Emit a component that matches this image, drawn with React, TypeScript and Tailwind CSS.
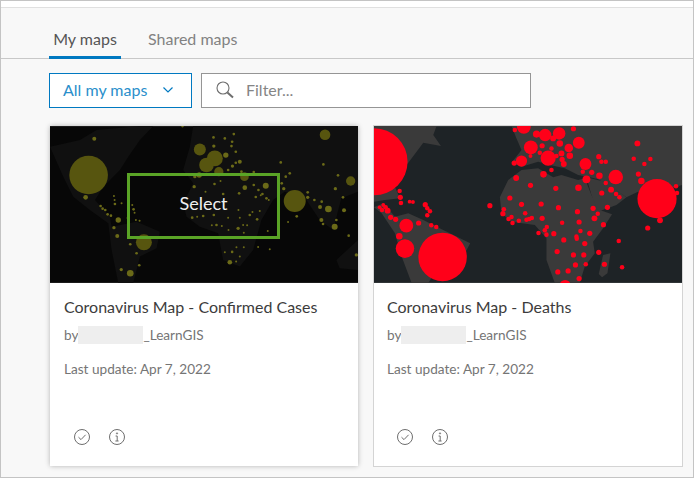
const font = "font-['Lato','Noto_Sans',sans-serif]";

// dots are [x, y, r] in 3x crop coordinates, same as the viewBox
const yellowDots = [
  [146, 165, 58], [312, 367, 24], [765, 243, 33], [480, 88, 18], [525, 115, 24], [500, 135, 22], [537, 155, 14], [856, 44, 16], [933, 183, 14], [614, 170, 13],
  [866, 267, 10], [885, 320, 9], [678, 197, 9], [235, 300, 8], [271, 460, 10], [137, 232, 7], [163, 56, 6], [570, 427, 7], [558, 105, 8], [950, 405, 5],
  [521, 52, 4], [555, 55, 4], [582, 42, 4], [577, 65, 4], [575, 78, 4], [588, 95, 4], [522, 78, 5], [600, 125, 6], [578, 138, 5], [588, 128, 4], [565, 150, 4], [605, 155, 4], [642, 156, 4],
  [723, 127, 4], [851, 133, 4], [750, 160, 4], [738, 170, 4], [726, 190, 4], [732, 206, 5], [895, 166, 4], [887, 206, 5], [910, 232, 4], [804, 217, 4], [804, 232, 5], [824, 240, 4], [846, 245, 4], [841, 261, 6], [913, 271, 6], [890, 300, 4], [845, 300, 6], [850, 312, 4], [927, 347, 4], [771, 289, 4], [745, 306, 3],
  [222, 228, 3], [224, 240, 3], [225, 252, 4], [245, 250, 3], [182, 258, 4], [188, 266, 4], [196, 270, 4], [203, 283, 4], [213, 287, 4], [277, 255, 3], [281, 268, 4], [284, 278, 3], [263, 294, 3], [288, 300, 3], [299, 302, 3], [222, 323, 5], [232, 348, 6], [271, 373, 4], [290, 400, 4], [298, 436, 4], [244, 449, 5],
  [465, 170, 5], [478, 165, 8], [463, 200, 5], [497, 215, 3], [524, 192, 4], [542, 183, 3], [550, 222, 4], [598, 220, 4], [615, 203, 7], [642, 195, 4], [656, 210, 4], [668, 222, 4], [680, 235, 4], [648, 231, 4], [663, 226, 3], [687, 240, 3],
  [457, 293, 4], [472, 290, 3], [490, 288, 4], [522, 285, 4], [565, 293, 3], [600, 293, 3], [630, 285, 4], [596, 270, 3], [638, 276, 3], [652, 298, 4], [660, 273, 3], [530, 315, 4], [516, 316, 3], [546, 318, 3], [566, 330, 3], [595, 325, 5], [610, 315, 3], [622, 316, 3], [612, 338, 3], [632, 352, 3], [684, 333, 3], [555, 397, 3], [577, 396, 4], [590, 382, 3], [612, 382, 3], [655, 381, 3], [690, 388, 3], [600, 410, 3], [589, 425, 3], [428, 18, 4],
];

const redDots = [
  [27, 125, 100], [233, 411, 72], [877, 236, 58], [120, 386, 27], [124, 317, 20], [498, 82, 20], [550, 114, 22], [470, 123, 16], [541, 45, 18], [583, 40, 18], [642, 68, 17], [662, 132, 17], [753, 171, 21], [477, 20, 20], [612, 84, 12], [515, 42, 10],
  [103, 349, 9], [161, 309, 7], [199, 316, 6], [214, 321, 6], [104, 213, 6], [106, 232, 7], [108, 249, 6], [134, 245, 5], [144, 246, 5], [181, 254, 7], [187, 265, 6], [195, 274, 6], [187, 286, 6], [92, 298, 7], [77, 292, 7], [68, 272, 8], [51, 270, 6], [44, 262, 5], [55, 255, 5], [62, 262, 6],
  [626, 26, 7], [818, 70, 8], [807, 116, 6], [857, 117, 6], [839, 132, 6], [821, 162, 7], [830, 183, 9], [934, 199, 6], [937, 219, 6], [886, 301, 8], [849, 324, 7], [762, 363, 6], [772, 442, 6], [719, 433, 7], [702, 397, 7], [375, 257, 7],
  [702, 110, 7], [710, 125, 6], [723, 125, 6], [654, 155, 6], [681, 157, 7], [665, 178, 11], [704, 167, 9], [723, 189, 6], [739, 209, 8], [711, 219, 7], [754, 222, 6], [764, 232, 6], [728, 262, 7], [685, 265, 7], [699, 281, 6], [689, 295, 8], [716, 314, 7],
  [448, 129, 7], [536, 163, 9], [560, 150, 6], [454, 174, 8], [497, 196, 7], [573, 205, 7], [641, 203, 9], [435, 234, 7], [470, 253, 7], [529, 252, 7], [581, 263, 7], [638, 275, 7], [417, 268, 6], [414, 281, 7], [440, 291, 6], [431, 297, 6], [443, 309, 6], [462, 302, 6], [481, 280, 6], [485, 299, 6], [493, 297, 6], [501, 294, 6], [532, 295, 7], [592, 308, 6], [643, 306, 7],
  [546, 321, 6], [540, 331, 6], [521, 339, 6], [545, 344, 6], [567, 341, 7], [647, 333, 6], [675, 340, 7], [635, 350, 6], [636, 356, 6], [597, 360, 7], [660, 371, 7], [577, 395, 7], [626, 405, 7], [657, 405, 7], [632, 435, 7], [663, 433, 6], [579, 456, 7], [610, 453, 7], [643, 476, 7], [601, 497, 16],
  [532, 77, 7], [565, 55, 8], [585, 70, 9], [560, 85, 6], [525, 98, 6], [590, 100, 8], [615, 107, 9], [575, 108, 6], [592, 118, 7], [597, 132, 8], [450, 30, 6], [497, 108, 5],
];

function CircleCheck() {
  return (
    <svg viewBox="0 0 18 18" className="h-[18px] w-[18px] fill-none stroke-[#6e6e6e]" strokeWidth="1">
      <circle cx="9" cy="9" r="7.5" />
      <path d="M5.5 9.2 8 11.6 12.6 6.8" />
    </svg>
  );
}

function CircleInfo() {
  return (
    <svg viewBox="0 0 18 18" className="h-[18px] w-[18px] fill-none stroke-[#6e6e6e]" strokeWidth="1">
      <circle cx="9" cy="9" r="7.5" />
      <path d="M7.6 8h1.6v5M7.4 13h3.2" />
      <circle cx="9" cy="5.4" r=".6" />
    </svg>
  );
}

function YellowMap() {
  return (
    <svg viewBox="30 18 925 471" className="block h-[157px] w-[308px]">
      <rect x="30" y="18" width="925" height="471" fill="#070707" />
      <g fill="#101010">
        <path d="M30 80 120 60 170 30 300 18 340 18 300 60 265 110 240 150 190 200 165 240 210 290 215 320 290 305 360 335 350 385 300 410 280 489 235 489 215 390 205 310 150 270 100 230 70 170Z" />
        <path d="M460 18 955 18 955 215 905 235 880 330 840 300 800 240 735 215 700 240 665 300 640 390 600 440 550 420 535 340 480 320 440 290 430 250 460 190 430 150 450 80Z" />
        <path d="M890 420 955 360 955 450 900 445Z" />
      </g>
      {yellowDots.map(([x, y, r], i) => (
        <circle key={i} cx={x} cy={y} r={r} fill={r > 12 ? "#57550f" : "#6b6a18"} />
      ))}
    </svg>
  );
}

function RedMap() {
  return (
    <svg viewBox="27 18 925 471" className="block h-[157px] w-[308px]">
      <rect x="27" y="18" width="925" height="471" fill="#1e2326" />
      <g fill="#3a3a3a">
        <path d="M27 18 215 18 205 45 228 78 175 68 125 135 95 165 85 190 105 235 60 240 27 245Z" />
        <path d="M27 262 55 250 90 290 130 280 175 300 215 320 316 370 300 400 215 450 190 489 140 489 110 410 90 340 50 280Z" />
        <path d="M440 18 952 18 952 195 905 210 820 215 785 232 745 205 700 178 675 172 640 165 600 145 555 135 520 125 470 140 440 128 470 90 455 55Z" />
        <path d="M405 232 430 180 470 150 520 145 565 172 590 165 640 180 660 175 680 225 705 270 742 283 715 325 685 365 690 400 660 440 645 489 570 489 545 420 545 355 510 315 440 305 410 280Z" />
        <path d="M665 172 720 185 785 232 755 255 700 275 680 225Z" />
        <path d="M715 405 737 400 728 460 712 472 702 462Z" />
      </g>
      {redDots.map(([x, y, r], i) => (
        <circle key={i} cx={x} cy={y} r={r + 0.8} fill="#ff0019" />
      ))}
    </svg>
  );
}

type CardProps = { title: string; map: React.ReactNode; hovered?: boolean };

function MapCard({ title, map, hovered }: CardProps) {
  return (
    <div className={`relative flex h-[340px] w-[308px] flex-col bg-white ${hovered ? "shadow-[0_0_5px_rgba(0,0,0,0.28)]" : "outline outline-[#d4d4d4]"}`}>
      {map}
      {hovered && (
        <div className="absolute left-[77px] top-[47px] flex h-[66px] w-[153px] items-center justify-center border-[3px] border-[#5aa426] pb-[5px] text-[18px] text-[#f0f0f0]">
          Select
        </div>
      )}
      <div className={`flex flex-1 flex-col ${hovered ? "px-[14px]" : "px-[13px]"}`}>
        <h3 className="mt-[14px] text-[16px] leading-[20px] text-[#3c3c3c]">{title}</h3>
        <p className="mt-[8px] flex h-[20px] items-center text-[13.6px] text-[#757575]">
          by
          <span className="h-[18px] w-[65px] bg-[#eeeeee]" />
          _LearnGIS
        </p>
        <p className="mt-[14px] text-[13.6px] leading-[20px] text-[#757575]">Last update: Apr 7, 2022</p>
        <div className="mt-auto mb-[20px] ml-[9px] flex gap-[17px]">
          <CircleCheck />
          <CircleInfo />
        </div>
      </div>
    </div>
  );
}

export default function App() {
  return (
    <div className={`${font} h-[478px] w-[694px] overflow-hidden border border-[#c4c4c4] bg-[#f8f8f8]`}>
      <div className="h-[7px] border-b border-[#e0e0e0] bg-white" />
      <div className="mt-[18px] flex h-[33px] items-start gap-[27px] border-b border-[#c8c8c8] pl-[48px]">
        <div className="h-[33px] w-[72px] border-b-[3px] border-[#0079c1] text-center text-[16px] leading-[26px] text-[#555555]">My maps</div>
        <div className="text-[16px] leading-[26px] text-[#828282]">Shared maps</div>
      </div>
      <div className="mt-[14px] flex gap-[9px] pl-[48px]">
        <div className="flex h-[35px] w-[143px] items-center border border-[#0079c1] bg-white pb-[1px] pl-[13px] text-[16px] text-[#2b8fcb]">
          All my maps
          <svg viewBox="0 0 12 8" className="ml-[15px] h-[8px] w-[12px] fill-none stroke-[#0079c1]" strokeWidth="1.2">
            <path d="M1.5 1.5 6 6l4.5-4.5" />
          </svg>
        </div>
        <div className="flex h-[35px] w-[330px] items-center border border-[#959595] bg-white pb-[1px] pl-[13px] text-[16px] text-[#858585]">
          <svg viewBox="0 0 20 20" className="h-[20px] w-[20px] fill-none stroke-[#6e6e6e]">
            <circle cx="8" cy="8" r="6" strokeWidth="1.1" />
            <path d="M12.4 12.4 18 17.6" strokeWidth="2" />
          </svg>
          <span className="ml-[11px]">Filter...</span>
        </div>
      </div>
      <div className="mt-[18px] flex gap-[16px] pl-[49px]">
        <MapCard title="Coronavirus Map - Confirmed Cases" map={<YellowMap />} hovered />
        <MapCard title="Coronavirus Map - Deaths" map={<RedMap />} />
      </div>
    </div>
  );
}
